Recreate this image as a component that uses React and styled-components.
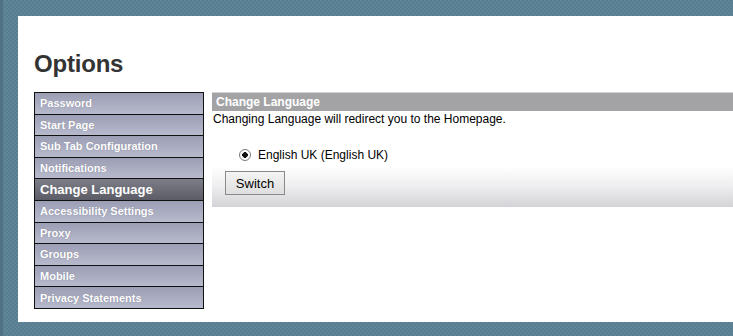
import styled, { createGlobalStyle, css } from 'styled-components';

const GlobalStyle = createGlobalStyle`
	html, body {
		margin: 0;
		padding: 0;
		overflow: hidden;
	}
	body {
		width: 733px;
		height: 336px;
		font-family: 'Liberation Sans', Arial, sans-serif;
		background-color: #5c8295;
		background-image: repeating-conic-gradient(#587d8f 0% 25%, #60869a 0% 50%);
		background-size: 4px 4px;
	}
`;

const Frame = styled.div`
	height: 336px;
	box-sizing: border-box;
	padding: 16px 0 14px 18px;
	border-left: 3px solid #4f7284;
`;

const Sheet = styled.div`
	height: 306px;
	margin-left: -3px;
	background: #fff;
	box-sizing: border-box;
	padding: 34px 0 0 16px;
	overflow: hidden;
`;

const Title = styled.h1`
	margin: 0;
	font-size: 24px;
	line-height: 28px;
	font-weight: bold;
	color: #333;
	letter-spacing: -0.2px;
`;

const Columns = styled.div`
	display: flex;
	gap: 8px;
	margin-top: 14px;
	align-items: flex-start;
`;

const Menu = styled.ul`
	list-style: none;
	margin: 0;
	padding: 0;
	width: 170px;
	flex: none;
	box-sizing: border-box;
	border: 1px solid #111;
	border-bottom: none;
`;

const MenuItem = styled.li`
	height: 20.6px;
	display: flex;
	align-items: center;
	padding-left: 5px;
	border-bottom: 1px solid #111;
	color: #fff;
	font-weight: bold;
	font-size: 11px;
	text-shadow: 0 0 1px rgba(80, 80, 100, 0.5);
	background: linear-gradient(#9c9eb5, #b7b9cc);
	${({ $active }) =>
		$active &&
		css`
			font-size: 13px;
			background: linear-gradient(#7d7e88, #5b5c66);
			text-shadow: none;
		`}
`;

const Panel = styled.section`
	flex: 1;
	min-width: 540px;
	border-top: 1px solid #d4d4d6;
	background: linear-gradient(#fff 0%, #fff 64%, #eeeef0 82%, #d3d3d7 100%);
	padding-bottom: 12px;
`;

const PanelHeader = styled.div`
	height: 18px;
	background: #a3a3a6;
	color: #fff;
	font-weight: bold;
	font-size: 12px;
	line-height: 18px;
	padding-left: 4px;
`;

const Note = styled.p`
	margin: 0;
	font-size: 12px;
	line-height: 16px;
	color: #000;
	padding-left: 1px;
`;

const Choice = styled.label`
	display: flex;
	align-items: center;
	gap: 7px;
	margin: 20px 0 0 27px;
	height: 16px;
	font-size: 12px;
	color: #000;
`;

const Radio = styled.input.attrs({ type: 'radio' })`
	appearance: none;
	margin: 0;
	width: 12px;
	height: 12px;
	border-radius: 50%;
	border: 1px solid #7a7a7a;
	background: radial-gradient(circle, #111 0 2.6px, #fff 3px);
	box-sizing: border-box;
`;

const Button = styled.button`
	display: block;
	margin: 8px 0 0 13px;
	width: 60px;
	height: 24px;
	font-family: inherit;
	font-size: 13px;
	color: #000;
	border: 1px solid #8a8a8a;
	border-radius: 0;
	background: linear-gradient(#f4f4f4, #dedede);
	padding: 0;
`;

const items = [
	'Password',
	'Start Page',
	'Sub Tab Configuration',
	'Notifications',
	'Change Language',
	'Accessibility Settings',
	'Proxy',
	'Groups',
	'Mobile',
	'Privacy Statements',
];

function App() {
	return (
		<>
			<GlobalStyle />
			<Frame>
				<Sheet>
					<Title>Options</Title>
					<Columns>
						<Menu>
							{items.map((name) => (
								<MenuItem key={name} $active={name === 'Change Language'}>
									{name}
								</MenuItem>
							))}
						</Menu>
						<Panel>
							<PanelHeader>Change Language</PanelHeader>
							<Note>Changing Language will redirect you to the Homepage.</Note>
							<Choice>
								<Radio name='lang' defaultChecked readOnly />
								English UK (English UK)
							</Choice>
							<Button type='button'>Switch</Button>
						</Panel>
					</Columns>
				</Sheet>
			</Frame>
		</>
	);
}

export default App;
